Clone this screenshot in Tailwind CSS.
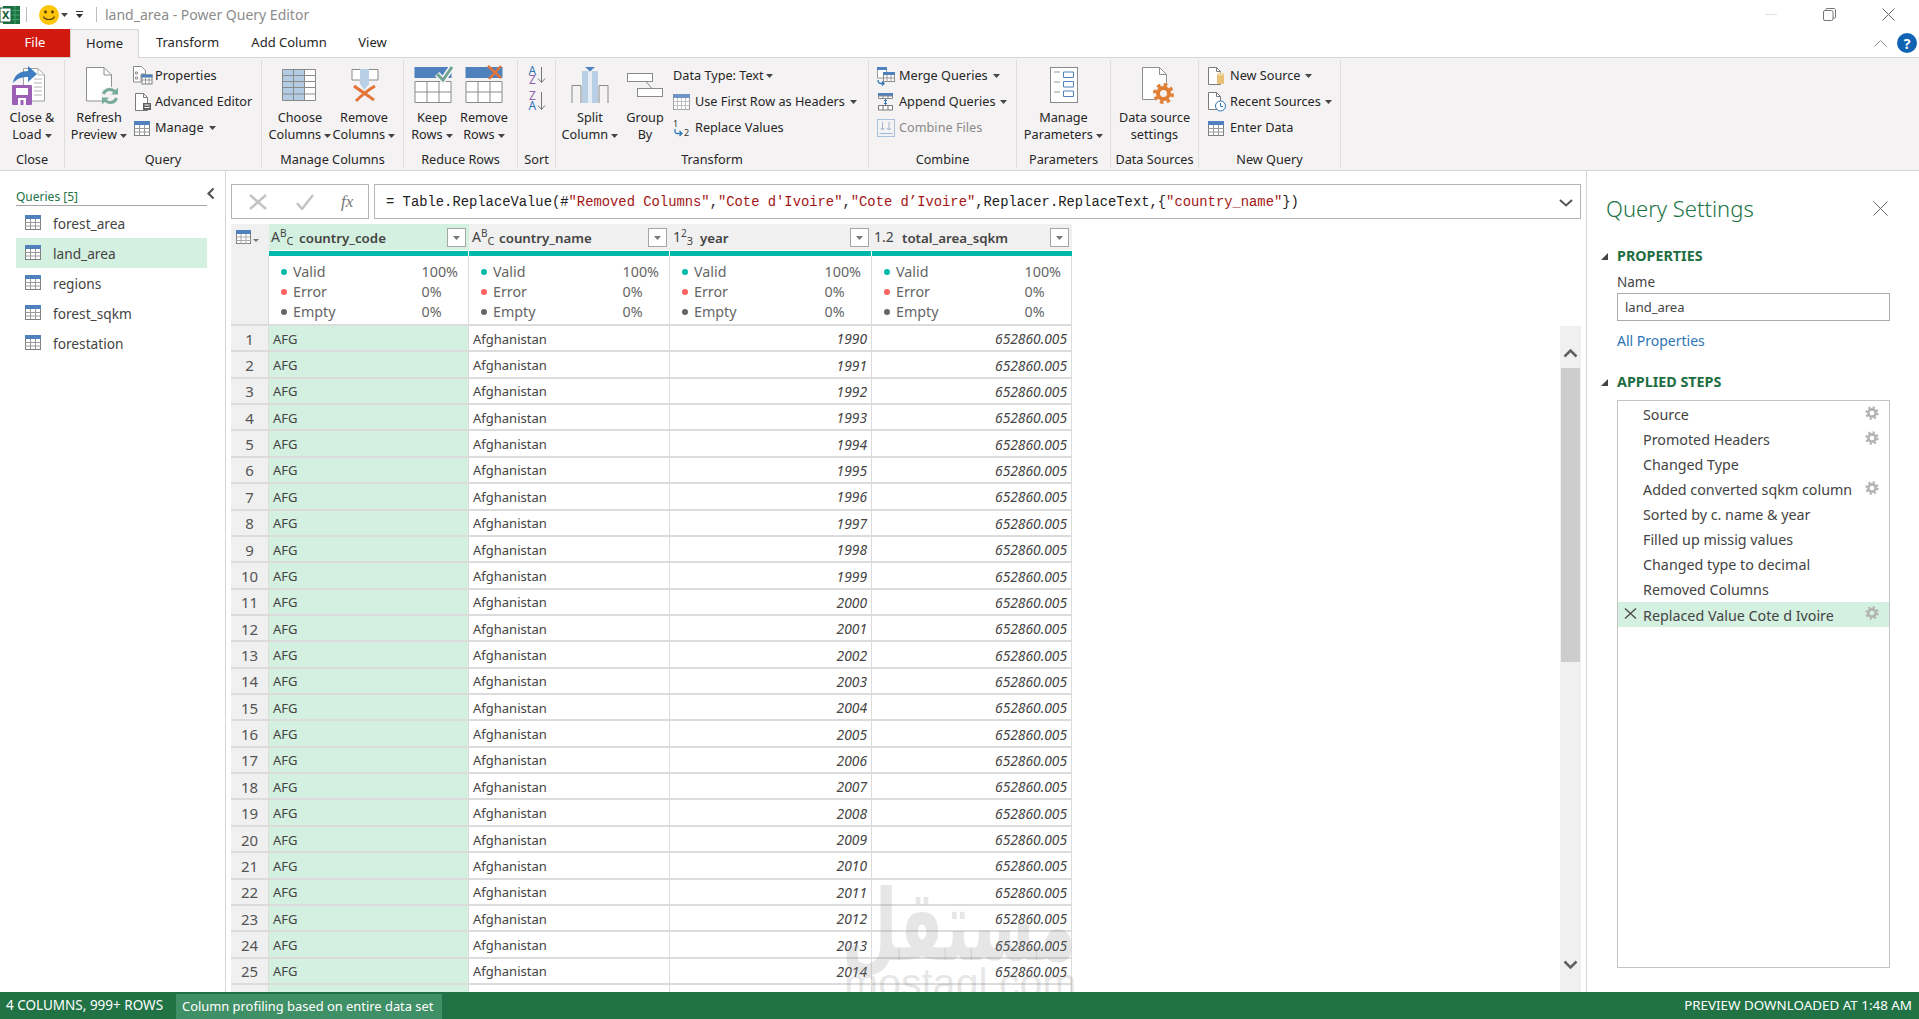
<!DOCTYPE html>
<html lang="en">
<head>
<meta charset="UTF-8" />
<title>land_area - Power Query Editor</title>
<script src="https://cdn.jsdelivr.net/npm/@tailwindcss/browser@4"></script>
</head>
<body class="bg-white">
<!-- shared icons -->
<svg width="0" height="0" class="absolute">
  <symbol id="caret" viewBox="0 0 7 4"><path d="M0 0h7L3.5 4z" fill="#444"/></symbol>
  <symbol id="tbl" viewBox="0 0 16 15">
    <rect x=".5" y=".5" width="15" height="14" fill="#fff" stroke="#7f7f7f"/>
    <rect x="0" y="0" width="16" height="4" fill="#4f81bd"/>
    <path d="M.5 7.5h15M.5 11h15M5.5 4v10M10.5 4v10" stroke="#9a9a9a" fill="none"/>
  </symbol>
  <symbol id="gear" viewBox="0 0 16 16">
    <circle cx="8" cy="8" r="4.2" fill="none" stroke="#b4b4b4" stroke-width="3"/>
    <circle cx="8" cy="8" r="6.4" fill="none" stroke="#b4b4b4" stroke-width="2.6" stroke-dasharray="2.51 2.51"/>
  </symbol>
  <symbol id="dd" viewBox="0 0 19 19">
    <rect x=".5" y=".5" width="18" height="18" fill="#fff" stroke="#a6a6a6"/>
    <path d="M6 8h7l-3.5 4z" fill="#777"/>
  </symbol>
</svg>

<div class="w-[1919px] h-[1019px] overflow-hidden flex flex-col whitespace-nowrap font-['Noto_Sans',sans-serif] text-[12.7px] text-[#262626]">

  <!-- title bar -->
  <div class="h-[29px] flex items-center shrink-0">
    <svg width="20" height="18" viewBox="0 0 20 18" class="shrink-0">
      <rect x="3" y="0" width="17" height="18" fill="#1f7244"/>
      <path d="M11 4.5h9M11 9h9M11 13.5h9M15 0v18" stroke="#3fa36c"/>
      <rect x="0" y="2" width="11" height="14" fill="#fff" stroke="#185c37"/>
      <text x="2" y="13" font-size="11" font-weight="700" fill="#185c37">X</text>
    </svg>
    <div class="w-px h-[15px] bg-[#bdbdbd] ml-[6px]"></div>
    <svg width="20" height="20" viewBox="0 0 20 20" class="ml-[12px] shrink-0">
      <circle cx="10" cy="10" r="10" fill="#fdc50a"/>
      <circle cx="6.5" cy="7" r="1.4" fill="#4a3a00"/><circle cx="13.5" cy="7" r="1.4" fill="#4a3a00"/>
      <path d="M4.5 11.5c1.5 4 9.500 4 11 0" fill="none" stroke="#4a3a00" stroke-width="1.200"/>
    </svg>
    <svg width="7" height="4" class="ml-[2px]"><use href="#caret"/></svg>
    <svg width="7" height="7" viewBox="0 0 7 7" class="ml-[8px]"><path d="M0 .5h7" stroke="#333"/><path d="M0 3h7L3.500 7z" fill="#333"/></svg>
    <div class="w-px h-[15px] bg-[#bdbdbd] ml-[13px]"></div>
    <span class="ml-[8px] text-[14px] text-[#8c8c8c]">land_area - Power Query Editor</span>
    <div class="ml-auto flex items-center">
      <div class="w-[12px] h-px bg-[#e2e2e2]"></div>
      <svg width="13" height="13" viewBox="0 0 13 13" class="ml-[46px]"><rect x=".5" y="2.500" width="9.500" height="10" rx="1.500" fill="#fff" stroke="#777"/><path d="M3 2.500V1.200C3 .8 3.300.5 3.700.5h7.300c.8 0 1.500.7 1.500 1.500v7.300c0 .4-.3.7-.7.7H10" fill="none" stroke="#777"/></svg>
      <svg width="13" height="13" viewBox="0 0 13 13" class="ml-[46px] mr-[24px]"><path d="M.5.5l12 12M12.500.5l-12 12" stroke="#666"/></svg>
    </div>
  </div>

  <!-- tabs -->
  <div class="h-[29px] flex items-stretch border-b border-[#d4d4d4] text-[13px] shrink-0 relative">
    <div class="w-[70px] bg-[#d2190f] text-white flex items-center justify-center">File</div>
    <div class="w-[69px] -mb-px bg-[#f4f2f3] border-x border-t border-[#d4d4d4] flex items-center justify-center">Home</div>
    <div class="w-[97px] flex items-center justify-center">Transform</div>
    <div class="w-[106px] flex items-center justify-center">Add Column</div>
    <div class="w-[61px] flex items-center justify-center">View</div>
    <div class="ml-auto flex items-center pr-[2px]">
      <svg width="13" height="7" viewBox="0 0 13 7"><path d="M.5 6.500l6-6 6 6" fill="none" stroke="#8a8a8a"/></svg>
      <div class="ml-[10px] w-[20px] h-[20px] rounded-full bg-[#0f63b2] text-white text-[14px] font-bold flex items-center justify-center">?</div>
    </div>
  </div>

  <!-- ribbon -->
  <div class="h-[113px] bg-[#f4f2f3] border-b border-[#d4d4d4] flex pt-[2px] shrink-0">

    <div class="w-[65px] h-[108px] border-r border-[#dedede] flex flex-col">
      <div class="flex-1 pt-[2px] flex">
        <div class="w-[64px] flex flex-col items-center">
          <svg width="40" height="46" viewBox="0 0 40 46" class="mb-px">
            <path d="M11.500 6.500H26l6.500 6.500v26H11.500z" fill="#fff" stroke="#a0a0a0"/>
            <path d="M26 6.500V13h6.500M22 17h8M22 21h8M22 25h8M22 29h8M22 33h8" fill="none" stroke="#b5b5b5"/>
            <rect x="0" y="23" width="20" height="20" rx="1" fill="#9b5fb5"/>
            <rect x="4" y="26" width="12" height="7" fill="#fff"/><rect x="6" y="36" width="8" height="7" fill="#fff"/><rect x="8.500" y="38" width="3" height="5" fill="#9b5fb5"/>
            <path d="M1 21C2 13 8 9 16 9V4l9 8-9 8v-5c-6 0-11 1.500-15 6z" fill="#3f7fc1"/>
          </svg>
          <span class="leading-[17px] text-center">Close &amp;<br>Load <svg width="7" height="4" class="inline align-middle"><use href="#caret"/></svg></span>
        </div>
      </div>
      <div class="text-center leading-[17px]">Close</div>
    </div>

    <div class="w-[197px] h-[108px] border-r border-[#dedede] flex flex-col">
      <div class="flex-1 pt-[2px] flex">
        <div class="w-[68px] flex flex-col items-center">
          <svg width="40" height="46" viewBox="0 0 40 46" class="mb-px">
            <path d="M7.500 5.500H25l7.500 7.500v26H7.500z" fill="#fff" stroke="#8f8f8f"/><path d="M25 5.500V13h7.500" fill="none" stroke="#8f8f8f"/>
            <circle cx="31" cy="34" r="9.500" fill="#f4f2f3"/>
            <path d="M24.500 32c1-3 3.500-4.500 6.500-4.500 2 0 3.500.8 4.800 2" fill="none" stroke="#76aa9a" stroke-width="3"/><path d="M39 25.500v7h-7z" fill="#76aa9a"/>
            <path d="M37.500 36c-1 3-3.500 4.500-6.500 4.500-2 0-3.500-.8-4.800-2" fill="none" stroke="#76aa9a" stroke-width="3"/><path d="M23 42.500v-7h7z" fill="#76aa9a"/>
          </svg>
          <span class="leading-[17px] text-center">Refresh<br>Preview <svg width="7" height="4" class="inline align-middle"><use href="#caret"/></svg></span>
        </div>
        <div class="flex flex-col mt-px">
          <div class="h-[26px] flex items-center"><svg width="22" height="20" viewBox="0 0 22 20" class="shrink-0"><path d="M.5.5h8l4 4V8H8v8H.5z" fill="#fff" stroke="#8a8a8a"/><path d="M2.500 6h2v2h-2zM2.500 11h2v2h-2z" fill="none" stroke="#777" stroke-width=".8"/><rect x="9" y="9" width="10" height="9" fill="#fff" stroke="#7f7f7f"/><rect x="8.500" y="8.500" width="11" height="3" fill="#4f81bd"/><path d="M9 14h10M12.500 11v7M16 11v7" stroke="#999"/></svg>Properties</div>
          <div class="h-[26px] flex items-center"><svg width="22" height="20" viewBox="0 0 22 20" class="shrink-0"><path d="M2.500 1.500h8l4 4v13h-12z" fill="#fff" stroke="#7a7a7a"/><path d="M10.500 1.500v4h4" fill="none" stroke="#7a7a7a"/><rect x="10" y="11" width="8" height="7" fill="#5f5f5f"/><path d="M11.500 13h5M11.500 15.500h5" stroke="#fff"/></svg>Advanced Editor</div>
          <div class="h-[26px] flex items-center"><svg width="22" height="15" class="shrink-0"><use href="#tbl" width="16" height="15" x="1"/></svg>Manage <svg width="7" height="4" class="ml-[5px]"><use href="#caret"/></svg></div>
        </div>
      </div>
      <div class="text-center leading-[17px]">Query</div>
    </div>

    <div class="w-[142px] h-[108px] border-r border-[#dedede] flex flex-col">
      <div class="flex-1 pt-[2px] flex pl-[6px]">
        <div class="w-[64px] flex flex-col items-center">
          <svg width="64" height="46" viewBox="0 0 64 46" class="mb-px">
            <rect x="14.500" y="7.500" width="33" height="31" fill="#fff"/>
            <rect x="14.500" y="7.500" width="22" height="31" fill="#b4cbe4"/>
            <path d="M14.500 7.500h33v31h-33zM25.500 7.500v31M36.500 7.500v31M14.500 13.500h33M14.500 19.500h33M14.500 25.500h33M14.500 32h33" fill="none" stroke="#8a8a8a"/>
          </svg>
          <span class="leading-[17px] text-center">Choose<br>Columns <svg width="7" height="4" class="inline align-middle"><use href="#caret"/></svg></span>
        </div>
        <div class="w-[64px] flex flex-col items-center">
          <svg width="64" height="46" viewBox="0 0 64 46" class="mb-px">
            <path d="M28 7.500h-8v10.500h8M37 7.500h9v10.500h-9" fill="#fff" stroke="#8a8a8a"/>
            <path d="M28 7h9v15l-4.500 6-4.500-6z" fill="#b9cfe6"/>
            <path d="M22 24c7 5 13 9 20 14M43 24c-7 4-13 9-19 15" fill="none" stroke="#e2743a" stroke-width="3"/>
          </svg>
          <span class="leading-[17px] text-center">Remove<br>Columns <svg width="7" height="4" class="inline align-middle"><use href="#caret"/></svg></span>
        </div>
      </div>
      <div class="text-center leading-[17px]">Manage Columns</div>
    </div>

    <div class="w-[114px] h-[108px] border-r border-[#dedede] flex flex-col">
      <div class="flex-1 pt-[2px] flex pl-[2px]">
        <div class="w-[52px] flex flex-col items-center">
          <svg width="52" height="46" viewBox="0 0 52 46" class="mb-px">
            <rect x="8.500" y="5" width="37" height="11" fill="#4f81bd"/>
            <path d="M9 19.500h36v21H9zM21 19.500v21M33 19.500v21M9 30h36" fill="#fff" stroke="#8a8a8a"/>
            <path d="M31 12l6 6 9-13" fill="none" stroke="#f4f2f3" stroke-width="6"/><path d="M31 12l6 6 9-13" fill="none" stroke="#6fa394" stroke-width="3"/>
          </svg>
          <span class="leading-[17px] text-center">Keep<br>Rows <svg width="7" height="4" class="inline align-middle"><use href="#caret"/></svg></span>
        </div>
        <div class="w-[52px] flex flex-col items-center">
          <svg width="52" height="46" viewBox="0 0 52 46" class="mb-px">
            <rect x="7.500" y="5" width="37" height="11" fill="#4f81bd"/>
            <path d="M8 19.500h36v21H8zM20 19.500v21M32 19.500v21M8 30h36" fill="#fff" stroke="#8a8a8a"/>
            <path d="M30 4l13 12M43 4L31 17" fill="none" stroke="#e2743a" stroke-width="2.500"/>
          </svg>
          <span class="leading-[17px] text-center">Remove<br>Rows <svg width="7" height="4" class="inline align-middle"><use href="#caret"/></svg></span>
        </div>
      </div>
      <div class="text-center leading-[17px]">Reduce Rows</div>
    </div>

    <div class="w-[38px] h-[108px] border-r border-[#dedede] flex flex-col">
      <div class="flex-1 pt-[2px]">
        <svg width="37" height="52" viewBox="0 0 37 52">
          <text x="10.500" y="13" font-size="12" fill="#2e75b6">A</text><text x="11" y="22" font-size="12" fill="#8e5fb0">Z</text>
          <path d="M23.500 5v15M20 16.500l3.500 4 3.500-4" fill="none" stroke="#777"/>
          <text x="11" y="38" font-size="12" fill="#8e5fb0">Z</text><text x="10.500" y="48" font-size="12" fill="#2e75b6">A</text>
          <path d="M23.500 30v17M20 43.500l3.500 4 3.500-4" fill="none" stroke="#777"/>
        </svg>
      </div>
      <div class="text-center leading-[17px]">Sort</div>
    </div>

    <div class="w-[313px] h-[108px] border-r border-[#dedede] flex flex-col">
      <div class="flex-1 pt-[2px] flex pl-[4px]">
        <div class="w-[60px] flex flex-col items-center">
          <svg width="60" height="46" viewBox="0 0 60 46" class="mb-px">
            <path d="M21 41V23.500h-9V41M39 41V23.500h9V41" fill="none" stroke="#8a8a8a"/>
            <rect x="22" y="9" width="16" height="32" fill="#e8eef6"/>
            <rect x="22" y="9" width="6" height="32" fill="#b9cfe6"/><rect x="32" y="9" width="6" height="32" fill="#b9cfe6"/>
            <path d="M25 5h10l-5 4.500z" fill="#4f81bd"/>
          </svg>
          <span class="leading-[17px] text-center">Split<br>Column <svg width="7" height="4" class="inline align-middle"><use href="#caret"/></svg></span>
        </div>
        <div class="w-[50px] flex flex-col items-center">
          <svg width="50" height="46" viewBox="0 0 50 46" class="mb-px">
            <rect x="7.500" y="11.500" width="25" height="8" fill="#fff" stroke="#8a8a8a"/>
            <rect x="17.500" y="26.500" width="25" height="8" fill="#fff" stroke="#8a8a8a"/>
            <path d="M26 19.500l6 7" stroke="#8a8a8a"/>
          </svg>
          <span class="leading-[17px] text-center">Group<br>By</span>
        </div>
        <div class="flex flex-col pl-[3px] mt-px">
          <div class="h-[26px] flex items-center">Data Type: Text <svg width="7" height="4" class="ml-[2px]"><use href="#caret"/></svg></div>
          <div class="h-[26px] flex items-center"><svg width="22" height="16" viewBox="0 0 22 16" class="shrink-0"><rect x=".5" y=".5" width="16" height="15" fill="#fff" stroke="#a0a0a0"/><rect width="17" height="4" fill="#6f93c4"/><path d="M.5 7.500h16M.5 11.500h16M4.500 4v12M8.500 4v12M12.500 4v12" stroke="#c0c0c0"/></svg>Use First Row as Headers <svg width="7" height="4" class="ml-[5px]"><use href="#caret"/></svg></div>
          <div class="h-[26px] flex items-center"><svg width="22" height="18" viewBox="0 0 22 18" class="shrink-0"><text x="0" y="8" font-size="9" fill="#333">1</text><text x="11" y="17" font-size="9" fill="#333">2</text><path d="M2 10v3c0 1 1 1.500 2 1.500h5M6.500 12l2.500 2.500L6.500 17" fill="none" stroke="#2e75b6" stroke-width="1.300"/></svg>Replace Values</div>
        </div>
      </div>
      <div class="text-center leading-[17px]">Transform</div>
    </div>

    <div class="w-[148px] h-[108px] border-r border-[#dedede] flex flex-col">
      <div class="flex-1 pt-[2px] flex pl-[8px]">
        <div class="flex flex-col mt-px">
          <div class="h-[26px] flex items-center"><svg width="22" height="20" viewBox="0 0 22 20" class="shrink-0"><path d="M.5 3h9v9h-9z" fill="#fff" stroke="#9a9a9a"/><rect width="10" height="3" y="1" fill="#4f81bd"/><rect x="6.500" y="7.500" width="11" height="8" fill="#fff" stroke="#8a8a8a"/><rect x="6" y="6" width="12" height="3" fill="#4f81bd"/><path d="M10 9v7M14 9v7M7 12h11" stroke="#999"/><path d="M1 14c0 2 1 3.500 3 3.500h3M5 15.500l2 2-2 2" fill="none" stroke="#2e75b6" stroke-width="1.300"/></svg>Merge Queries <svg width="7" height="4" class="ml-[5px]"><use href="#caret"/></svg></div>
          <div class="h-[26px] flex items-center"><svg width="22" height="18" viewBox="0 0 22 18" class="shrink-0"><rect x="1" y="0" width="15" height="3" fill="#4f81bd"/><path d="M1.500 3h14v2.500h-14zM6 3v2.500M11 3v2.500" fill="#fff" stroke="#888"/><path d="M1.500 12.500h14V17h-14zM6 12.500V17M11 12.500V17" fill="#fff" stroke="#777"/><path d="M8.500 6.500v5M7 8l1.500-1.500L10 8M7 10l1.500 1.500L10 10" fill="none" stroke="#2e75b6"/></svg>Append Queries <svg width="7" height="4" class="ml-[5px]"><use href="#caret"/></svg></div>
          <div class="h-[26px] flex items-center text-[#8a8a8a]"><svg width="22" height="18" viewBox="0 0 22 18" class="shrink-0"><rect x=".5" y=".5" width="17" height="17" fill="none" stroke="#a9c0da"/><path d="M5.500 3v8M3.500 9l2 2 2-2M12 3v8M10 9l2 2 2-2M2.500 14.500h13" fill="none" stroke="#9db7d4"/></svg>Combine Files</div>
        </div>
      </div>
      <div class="text-center leading-[17px]">Combine</div>
    </div>

    <div class="w-[94px] h-[108px] border-r border-[#dedede] flex flex-col">
      <div class="flex-1 pt-[2px] flex flex-col items-center">
        <svg width="40" height="46" viewBox="0 0 40 46" class="mb-px">
          <rect x="6.500" y="5.500" width="27" height="35" fill="#fff" stroke="#8a8a8a"/>
          <path d="M10 10h6M10 20h6M10 30h6" stroke="#999"/>
          <path d="M19.500 10h10v5.500h-10zM19.500 19.500h10v5.500h-10zM19.500 29h10v5.500h-10z" fill="#fff" stroke="#4f81bd"/>
        </svg>
        <span class="leading-[17px] text-center">Manage<br>Parameters <svg width="7" height="4" class="inline align-middle"><use href="#caret"/></svg></span>
      </div>
      <div class="text-center leading-[17px]">Parameters</div>
    </div>

    <div class="w-[88px] h-[108px] border-r border-[#dedede] flex flex-col">
      <div class="flex-1 pt-[2px] flex flex-col items-center">
        <svg width="40" height="46" viewBox="0 0 40 46" class="mb-px">
          <path d="M7.500 5.500h17l7 7v25h-24z" fill="#fff" stroke="#8f8f8f"/><path d="M24.500 5.500v7h7" fill="none" stroke="#8f8f8f"/>
          <circle cx="28.500" cy="31.500" r="10.500" fill="#f4f2f3"/>
          <circle cx="28.500" cy="31.500" r="5.500" fill="none" stroke="#e07f33" stroke-width="4"/>
          <circle cx="28.500" cy="31.500" r="8.700" fill="none" stroke="#e07f33" stroke-width="3.500" stroke-dasharray="3.420 3.420"/>
        </svg>
        <span class="leading-[17px] text-center">Data source<br>settings</span>
      </div>
      <div class="text-center leading-[17px]">Data Sources</div>
    </div>

    <div class="w-[142px] h-[108px] border-r border-[#dedede] flex flex-col">
      <div class="flex-1 pt-[2px] flex pl-[9px]">
        <div class="flex flex-col mt-px">
          <div class="h-[26px] flex items-center"><svg width="22" height="20" viewBox="0 0 22 20" class="shrink-0"><path d="M.5 1.500h8l4 4v13H.5z" fill="#fff" stroke="#7a7a7a"/><path d="M8.500 1.500v4h4" fill="none" stroke="#7a7a7a"/><rect x="9" y="7" width="7" height="11" rx="1.500" fill="#e7bf75"/><ellipse cx="12.500" cy="8" rx="3.500" ry="1.500" fill="#f3dcaa"/></svg>New Source <svg width="7" height="4" class="ml-[4px]"><use href="#caret"/></svg></div>
          <div class="h-[26px] flex items-center"><svg width="22" height="20" viewBox="0 0 22 20" class="shrink-0"><path d="M.5 .5h8l4 4v13H.5z" fill="#fff" stroke="#7a7a7a"/><path d="M8.500 .5v4h4" fill="none" stroke="#7a7a7a"/><circle cx="12.500" cy="14" r="5" fill="#fff" stroke="#2e75b6"/><path d="M12.500 11v3.500h2.500" fill="none" stroke="#2e75b6"/></svg>Recent Sources <svg width="7" height="4" class="ml-[4px]"><use href="#caret"/></svg></div>
          <div class="h-[26px] flex items-center"><svg width="22" height="15" class="shrink-0"><use href="#tbl" width="16" height="15"/></svg>Enter Data</div>
        </div>
      </div>
      <div class="text-center leading-[17px]">New Query</div>
    </div>

    <div class="flex-1"></div>
  </div>

  <!-- main -->
  <div class="flex-1 min-h-0 flex">

    <!-- queries pane -->
    <aside class="w-[226px] shrink-0 border-r border-[#d4d4d4] pl-[16px] pt-[17px] text-[13.7px] text-[#444]">
      <div class="w-[191px] h-[18px] border-b border-[#a6a6a6] text-[12px] leading-[18px] text-[#217346] relative">Queries [5]
        <svg width="9" height="13" viewBox="0 0 9 13" class="absolute -right-[8px] -top-[1px]"><path d="M7.500 1.500L2.500 6.500l5 5" fill="none" stroke="#555" stroke-width="2.200"/></svg>
      </div>
      <div class="w-[191px] mt-[2px] flex flex-col">
        <div class="h-[30px] flex items-center pl-[9px] pt-[2px] gap-[12px]"><svg width="16" height="15" class="shrink-0 -translate-y-[2px]"><use href="#tbl"/></svg>forest_area</div>
        <div class="h-[30px] flex items-center pl-[9px] pt-[2px] gap-[12px] bg-[#d4f0e0]"><svg width="16" height="15" class="shrink-0 -translate-y-[2px]"><use href="#tbl"/></svg>land_area</div>
        <div class="h-[30px] flex items-center pl-[9px] pt-[2px] gap-[12px]"><svg width="16" height="15" class="shrink-0 -translate-y-[2px]"><use href="#tbl"/></svg>regions</div>
        <div class="h-[30px] flex items-center pl-[9px] pt-[2px] gap-[12px]"><svg width="16" height="15" class="shrink-0 -translate-y-[2px]"><use href="#tbl"/></svg>forest_sqkm</div>
        <div class="h-[30px] flex items-center pl-[9px] pt-[2px] gap-[12px]"><svg width="16" height="15" class="shrink-0 -translate-y-[2px]"><use href="#tbl"/></svg>forestation</div>
      </div>
    </aside>

    <!-- data pane -->
    <section class="flex-[0_0_1361px] border-r border-[#d4d4d4] flex flex-col pt-[13px] pl-[5px] pr-[5px] overflow-hidden relative">
      <div class="h-[35px] flex gap-[5px] shrink-0">
        <div class="w-[138px] border border-[#b5b5b5] flex items-center relative">
          <svg width="18" height="16" viewBox="0 0 18 16" class="ml-[17px]"><path d="M1 1l16 14M17 1L1 15" stroke="#c4c4c4" stroke-width="2.500"/></svg>
          <svg width="18" height="16" viewBox="0 0 18 16" class="ml-[29px]"><path d="M1 9l5 6L17 1" fill="none" stroke="#c4c4c4" stroke-width="2.500"/></svg>
          <span class="ml-[27px] font-['Liberation_Serif',serif] italic text-[17px] text-[#777]">fx</span>
        </div>
        <div class="flex-1 border border-[#b5b5b5] flex items-center pl-[11px] pt-[2px] font-['Liberation_Mono',monospace] text-[13.84px] text-[#222] relative">= Table.ReplaceValue(#<span class="text-[#a31515]">"Removed Columns"</span>,<span class="text-[#a31515]">"Cote d'Ivoire"</span>,<span class="text-[#a31515]">"Cote d’Ivoire"</span>,Replacer.ReplaceText,{<span class="text-[#a31515]">"country_name"</span>})
          <svg width="14" height="8" viewBox="0 0 14 8" class="absolute right-[7px] top-[14px]"><path d="M1 1l6 5.500L13 1" fill="none" stroke="#555" stroke-width="2"/></svg>
        </div>
      </div>

      <div class="flex mt-[5px] min-h-0 flex-1">
        <table class="w-[841px] h-fit table-fixed border-separate border-spacing-0 shrink-0">
          <colgroup><col class="w-[38px]"><col class="w-[200px]"><col class="w-[201px]"><col class="w-[202px]"><col class="w-[200px]"></colgroup>
          <thead class="text-[13.3px] font-semibold text-[#444]">
            <tr class="h-[26px]">
              <th class="bg-[#f0f0f0] p-0"><svg width="24" height="15" viewBox="0 0 24 15" class="ml-[5px]"><rect x=".5" y=".5" width="14" height="13" fill="#fff" stroke="#7f7f7f"/><rect width="15" height="4" fill="#4f81bd"/><path d="M.5 7h14M.5 10.500h14M5 4v10M10 4v10" stroke="#aaa"/><path d="M17 9h6l-3 3z" fill="#777"/></svg></th>
              <th class="bg-[#d4f0e0] p-0 font-semibold"><div class="flex items-center pl-[2px] pr-[3px]"><span class="w-[28px] text-left font-normal text-[14px] leading-none">A<sup class="text-[10px]">B</sup><sub class="text-[11px]">C</sub></span><span class="pt-[3px]">country_code</span><svg width="19" height="19" class="ml-auto"><use href="#dd"/></svg></div></th>
              <th class="bg-[#f0f0f0] p-0 font-semibold"><div class="flex items-center pl-[3px] pr-[3px]"><span class="w-[27px] text-left font-normal text-[14px] leading-none">A<sup class="text-[10px]">B</sup><sub class="text-[11px]">C</sub></span><span class="pt-[3px]">country_name</span><svg width="19" height="19" class="ml-auto"><use href="#dd"/></svg></div></th>
              <th class="bg-[#f0f0f0] p-0 font-semibold"><div class="flex items-center pl-[3px] pr-[3px]"><span class="w-[27px] text-left font-normal text-[14px] leading-none">1<sup class="text-[10px]">2</sup><sub class="text-[11px]">3</sub></span><span class="pt-[3px]">year</span><svg width="19" height="19" class="ml-auto"><use href="#dd"/></svg></div></th>
              <th class="bg-[#f0f0f0] p-0 font-semibold"><div class="flex items-center pl-[2px] pr-[3px]"><span class="w-[28px] text-left font-normal text-[14px] leading-none">1.2</span><span class="pt-[3px]">total_area_sqkm</span><svg width="19" height="19" class="ml-auto"><use href="#dd"/></svg></div></th>
            </tr>
            <tr class="h-[6px]">
              <th class="bg-[#f0f0f0] p-0"></th>
              <th class="p-0 pt-px pr-px"><div class="h-[5px] bg-[#01b8aa]"></div></th>
              <th class="p-0 pt-px pr-px"><div class="h-[5px] bg-[#01b8aa]"></div></th>
              <th class="p-0 pt-px pr-px"><div class="h-[5px] bg-[#01b8aa]"></div></th>
              <th class="p-0 pt-px"><div class="h-[5px] bg-[#01b8aa]"></div></th>
            </tr>
          </thead>
          <tbody class="text-[14.3px] text-[#666] [&_.prof]:h-[70px] [&_.prof]:p-0 [&_.prof]:pt-[4px] [&_.prof]:border-b-2 [&_.prof]:border-r [&_.prof]:border-[#dcdcdc]">
            <tr>
              <td class="prof bg-[#f0f0f0]"></td>
              <td class="prof"><div class="grid grid-cols-[8px_1fr_auto] items-center gap-x-[4px] pl-[12px] pr-[10px] leading-[20px]"><i class="w-[6px] h-[6px] rounded-full bg-[#01b8aa]"></i><span>Valid</span><span>100%</span><i class="w-[6px] h-[6px] rounded-full bg-[#fd625e]"></i><span>Error</span><span>0%</span><i class="w-[6px] h-[6px] rounded-full bg-[#666]"></i><span>Empty</span><span>0%</span></div></td>
              <td class="prof"><div class="grid grid-cols-[8px_1fr_auto] items-center gap-x-[4px] pl-[12px] pr-[10px] leading-[20px]"><i class="w-[6px] h-[6px] rounded-full bg-[#01b8aa]"></i><span>Valid</span><span>100%</span><i class="w-[6px] h-[6px] rounded-full bg-[#fd625e]"></i><span>Error</span><span>0%</span><i class="w-[6px] h-[6px] rounded-full bg-[#666]"></i><span>Empty</span><span>0%</span></div></td>
              <td class="prof"><div class="grid grid-cols-[8px_1fr_auto] items-center gap-x-[4px] pl-[12px] pr-[10px] leading-[20px]"><i class="w-[6px] h-[6px] rounded-full bg-[#01b8aa]"></i><span>Valid</span><span>100%</span><i class="w-[6px] h-[6px] rounded-full bg-[#fd625e]"></i><span>Error</span><span>0%</span><i class="w-[6px] h-[6px] rounded-full bg-[#666]"></i><span>Empty</span><span>0%</span></div></td>
              <td class="prof"><div class="grid grid-cols-[8px_1fr_auto] items-center gap-x-[4px] pl-[12px] pr-[10px] leading-[20px]"><i class="w-[6px] h-[6px] rounded-full bg-[#01b8aa]"></i><span>Valid</span><span>100%</span><i class="w-[6px] h-[6px] rounded-full bg-[#fd625e]"></i><span>Error</span><span>0%</span><i class="w-[6px] h-[6px] rounded-full bg-[#666]"></i><span>Empty</span><span>0%</span></div></td>
            </tr>
          </tbody>
          <tbody class="text-[13px] text-[#444] leading-none [&_td]:h-[26.36px] [&_td]:p-0 [&_td]:pt-[2px] [&_td]:px-1 [&_td]:border-b-2 [&_td]:border-r [&_td]:border-[#dcdcdc] [&_td:nth-child(1)]:bg-[#f0f0f0] [&_td:nth-child(1)]:text-center [&_td:nth-child(1)]:text-[15px] [&_td:nth-child(1)]:text-[#555] [&_td:nth-child(2)]:bg-[#d4f0e0] [&_td:nth-child(n+4)]:text-right [&_td:nth-child(n+4)]:italic [&_td:nth-child(n+4)]:text-[13.8px]">
            <tr><td>1<td>AFG<td>Afghanistan<td>1990<td>652860.005</tr>
            <tr><td>2<td>AFG<td>Afghanistan<td>1991<td>652860.005</tr>
            <tr><td>3<td>AFG<td>Afghanistan<td>1992<td>652860.005</tr>
            <tr><td>4<td>AFG<td>Afghanistan<td>1993<td>652860.005</tr>
            <tr><td>5<td>AFG<td>Afghanistan<td>1994<td>652860.005</tr>
            <tr><td>6<td>AFG<td>Afghanistan<td>1995<td>652860.005</tr>
            <tr><td>7<td>AFG<td>Afghanistan<td>1996<td>652860.005</tr>
            <tr><td>8<td>AFG<td>Afghanistan<td>1997<td>652860.005</tr>
            <tr><td>9<td>AFG<td>Afghanistan<td>1998<td>652860.005</tr>
            <tr><td>10<td>AFG<td>Afghanistan<td>1999<td>652860.005</tr>
            <tr><td>11<td>AFG<td>Afghanistan<td>2000<td>652860.005</tr>
            <tr><td>12<td>AFG<td>Afghanistan<td>2001<td>652860.005</tr>
            <tr><td>13<td>AFG<td>Afghanistan<td>2002<td>652860.005</tr>
            <tr><td>14<td>AFG<td>Afghanistan<td>2003<td>652860.005</tr>
            <tr><td>15<td>AFG<td>Afghanistan<td>2004<td>652860.005</tr>
            <tr><td>16<td>AFG<td>Afghanistan<td>2005<td>652860.005</tr>
            <tr><td>17<td>AFG<td>Afghanistan<td>2006<td>652860.005</tr>
            <tr><td>18<td>AFG<td>Afghanistan<td>2007<td>652860.005</tr>
            <tr><td>19<td>AFG<td>Afghanistan<td>2008<td>652860.005</tr>
            <tr><td>20<td>AFG<td>Afghanistan<td>2009<td>652860.005</tr>
            <tr><td>21<td>AFG<td>Afghanistan<td>2010<td>652860.005</tr>
            <tr><td>22<td>AFG<td>Afghanistan<td>2011<td>652860.005</tr>
            <tr><td>23<td>AFG<td>Afghanistan<td>2012<td>652860.005</tr>
            <tr><td>24<td>AFG<td>Afghanistan<td>2013<td>652860.005</tr>
            <tr><td>25<td>AFG<td>Afghanistan<td>2014<td>652860.005</tr>
            <tr><td><td><td><td><td></tr>
          </tbody>
        </table>

        <!-- scrollbar -->
        <div class="ml-auto mt-[102px] w-[21px] bg-[#f0f0f0] flex flex-col items-center shrink-0">
          <svg width="15" height="10" viewBox="0 0 15 10" class="mt-[22px]"><path d="M1.500 8.500l6-6 6 6" fill="none" stroke="#606060" stroke-width="2.500"/></svg>
          <div class="w-[19px] h-[294px] bg-[#cdcdcd] mt-[10px]"></div>
          <svg width="15" height="10" viewBox="0 0 15 10" class="mt-auto mb-[22px]"><path d="M1.500 1.500l6 6 6-6" fill="none" stroke="#606060" stroke-width="2.500"/></svg>
        </div>
      </div>

      <!-- watermark -->
      <div class="absolute left-[618px] top-[720px] w-[232px] text-center pointer-events-none text-[#808080]/20">
        <div dir="rtl" lang="ar" class="font-['DejaVu_Sans',sans-serif] font-bold text-[64px] leading-[70px] h-[70px] scale-y-[1.55]">مستقل</div>
        <div class="mt-[2px] font-['Liberation_Sans',sans-serif] text-[41px] leading-[40px]">mostaql.com</div>
      </div>
    </section>

    <!-- query settings -->
    <aside class="flex-1 min-w-0 pl-[19px] pt-[19px] text-[#444]">
      <div class="flex items-center h-[36px]">
        <span class="font-light text-[22px] text-[#217346]">Query Settings</span>
        <svg width="15" height="15" viewBox="0 0 15 15" class="ml-[119px]"><path d="M.5.5l14 14M14.500.5l-14 14" stroke="#666"/></svg>
      </div>
      <div class="flex items-center h-[20px] mt-[20px]">
        <svg width="7" height="7" viewBox="0 0 7 7" class="-ml-[5px]"><path d="M7 0v7H0z" fill="#444"/></svg>
        <span class="ml-[9px] text-[#1e6e42] font-bold text-[14.3px]">PROPERTIES</span>
      </div>
      <div class="ml-[11px] mt-[6px] text-[13.5px] leading-[20px]">Name</div>
      <div class="ml-[11px] mt-[1px] w-[273px] h-[28px] border border-[#ababab] pl-[7px] pt-[2px] flex items-center text-[13px]">land_area</div>
      <div class="ml-[11px] mt-[10px] text-[14px] leading-[20px] text-[#2e75b6]">All Properties</div>
      <div class="flex items-center h-[20px] mt-[21px]">
        <svg width="7" height="7" viewBox="0 0 7 7" class="-ml-[5px]"><path d="M7 0v7H0z" fill="#444"/></svg>
        <span class="ml-[9px] text-[#1e6e42] font-bold text-[14.3px]">APPLIED STEPS</span>
      </div>
      <div class="ml-[11px] mt-[8px] w-[273px] h-[568px] border border-[#c4c4c4] text-[14.3px]">
        <div class="h-[25.1px] flex items-center pl-[25px] pt-[2px] pr-[10px] justify-between">Source<svg width="14" height="14" class="-translate-y-[2px]"><use href="#gear"/></svg></div>
        <div class="h-[25.1px] flex items-center pl-[25px] pt-[2px] pr-[10px] justify-between">Promoted Headers<svg width="14" height="14" class="-translate-y-[2px]"><use href="#gear"/></svg></div>
        <div class="h-[25.1px] flex items-center pl-[25px] pt-[2px] pr-[10px]">Changed Type</div>
        <div class="h-[25.1px] flex items-center pl-[25px] pt-[2px] pr-[10px] justify-between">Added converted sqkm column<svg width="14" height="14" class="-translate-y-[2px]"><use href="#gear"/></svg></div>
        <div class="h-[25.1px] flex items-center pl-[25px] pt-[2px] pr-[10px]">Sorted by c. name &amp; year</div>
        <div class="h-[25.1px] flex items-center pl-[25px] pt-[2px] pr-[10px]">Filled up missig values</div>
        <div class="h-[25.1px] flex items-center pl-[25px] pt-[2px] pr-[10px]">Changed type to decimal</div>
        <div class="h-[25.1px] flex items-center pl-[25px] pt-[2px] pr-[10px]">Removed Columns</div>
        <div class="h-[25.1px] flex items-center pl-[6px] pt-[2px] pr-[10px] bg-[#d4f0e0]"><svg width="13" height="11" viewBox="0 0 13 11" class="mr-[6px] shrink-0 -translate-y-[2px]"><path d="M1 .5l11 10M12 .5L1 10.500" stroke="#555" stroke-width="1.500"/></svg>Replaced Value Cote d Ivoire<svg width="14" height="14" class="ml-auto -translate-y-[2px]"><use href="#gear"/></svg></div>
      </div>
    </aside>
  </div>

  <!-- status bar -->
  <div class="h-[27px] bg-[#217346] text-white text-[13.5px] flex items-center shrink-0">
    <span class="pl-[6px] w-[176px]">4 COLUMNS, 999+ ROWS</span>
    <span class="h-[25px] mt-[2px] w-[266px] bg-[#3f9066] flex items-center pl-[6px] text-[12.9px]">Column profiling based on entire data set</span>
    <span class="ml-auto pr-[7px] text-[13.4px]">PREVIEW DOWNLOADED AT 1:48 AM</span>
  </div>
</div>
</body>
</html>
